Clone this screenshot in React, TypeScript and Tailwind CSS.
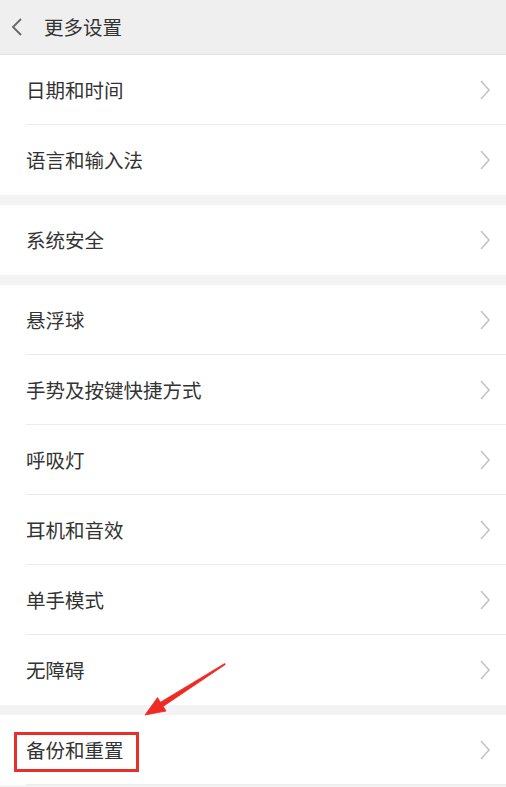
const font = { fontFamily: '"Noto Sans CJK SC", "Noto Sans", sans-serif' };

const groups: string[][] = [
  ['日期和时间', '语言和输入法'],
  ['系统安全'],
  ['悬浮球', '手势及按键快捷方式', '呼吸灯', '耳机和音效', '单手模式', '无障碍'],
  ['备份和重置'],
];

const Chevron = () => (
  <svg width="12" height="22" viewBox="0 0 12 22" fill="none" stroke="#c4c4c4" strokeWidth="1.6">
    <path d="M2 2 L10 11 L2 20" />
  </svg>
);

const Row = ({ label, last, highlight }: { label: string; last: boolean; highlight?: boolean }) => (
  <div className="relative h-[70px] pl-[26px]">
    <div className={`flex h-full items-center justify-between pr-[15px] ${last ? '' : 'border-b border-[#ececec]'}`}>
      <span className="text-[19.5px] text-[#333333]">{label}</span>
      <Chevron />
    </div>
    {highlight && (
      <div className="absolute left-[14px] top-[17px] h-[40px] w-[125px] border-[3px] border-[#e8302a]" />
    )}
  </div>
);

export default function App() {
  return (
    <div className="relative h-[787px] w-[506px] overflow-hidden bg-[#f3f3f3]" style={font}>
      {/* header */}
      <div className="flex h-[55px] items-center border-b border-[#e2e2e2] bg-[#efefef]">
        <svg className="ml-[11px]" width="12" height="20" viewBox="0 0 12 20" fill="none" stroke="#666" strokeWidth="1.8">
          <path d="M10 2 L2 10 L10 18" />
        </svg>
        <span className="ml-[21px] text-[19.5px] text-[#333333]">更多设置</span>
      </div>

      <div className="flex flex-col gap-[10px]">
        {groups.map((g, gi) => (
          <div key={gi} className="bg-white">
            {g.map((label, i) => (
              <Row key={label} label={label} last={i === g.length - 1 && gi !== 3} highlight={label === '备份和重置'} />
            ))}
          </div>
        ))}
      </div>

      {/* annotation arrow */}
      <svg className="absolute left-0 top-0" width="506" height="787" viewBox="0 0 506 787" fill="none">
        <path
          d="M145 715 L157.5 697.6 L160.5 702.2 L224.7 663.5 L225.3 664.5 L163.1 706.4 L166.1 711 Z"
          fill="#ee2a24"
          stroke="#ee2a24"
          strokeWidth="0.8"
          strokeLinejoin="round"
        />
      </svg>
    </div>
  );
}
